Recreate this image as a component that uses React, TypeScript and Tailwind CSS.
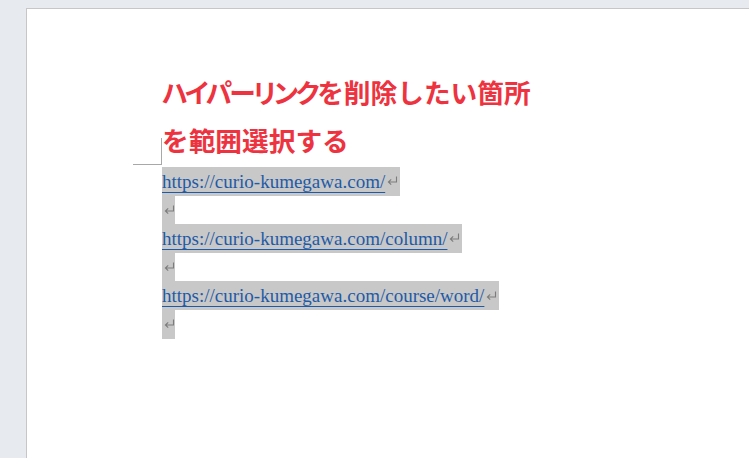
const links = [
  "https://curio-kumegawa.com/",
  "https://curio-kumegawa.com/column/",
  "https://curio-kumegawa.com/course/word/",
];

function ReturnMark() {
  return (
    <svg viewBox="0 0 11 10" className="ml-[2px] h-[10px] w-[11px] shrink-0 text-[#7c7c7c]" fill="none">
      <path d="M9.5 0.5V6H1.5M4.2 3.3L1.4 6L4.2 8.7" stroke="currentColor" strokeWidth="1.1" />
    </svg>
  );
}

function EmptyPara() {
  return (
    <div className="flex h-[28.6px] w-[13px] items-center bg-[#c8c8c8]">
      <ReturnMark />
    </div>
  );
}

function LinkPara({ href }: { href: string }) {
  return (
    <div className="flex h-[28.6px] w-fit items-center bg-[#c8c8c8] pr-[2px]">
      <span className="font-['Liberation_Serif',serif] text-[19px] leading-none text-[#1f5aa6] underline decoration-[#1f5aa6] underline-offset-[4px]">
        {href}
      </span>
      <ReturnMark />
    </div>
  );
}

export default function App() {
  return (
    <div className="h-[458px] w-[749px] overflow-hidden bg-[#e7ebef] pl-[26px] pt-[8px]">
      <div className="h-full w-full border-l border-t border-[#c6c6c6] bg-white pl-[135px] pt-[59px]">
        <h1 className="font-['Noto_Sans_CJK_JP',sans-serif] text-[26.7px] font-bold leading-[48px] text-[#ee3340]">
          <div>
            <span className="tracking-[-2.4px] [font-feature-settings:'palt']">ハイパーリンク</span>を削除したい箇所
          </div>
          <div className="relative">
            <span className="absolute left-[-29px] top-[22px] h-[27px] w-[29px] border-b border-r border-[#a8a8a8]" />
            を範囲選択する
          </div>
        </h1>
        <div className="mt-[3px] flex flex-col">
          <LinkPara href={links[0]} />
          <EmptyPara />
          <LinkPara href={links[1]} />
          <EmptyPara />
          <LinkPara href={links[2]} />
          <EmptyPara />
        </div>
      </div>
    </div>
  );
}
